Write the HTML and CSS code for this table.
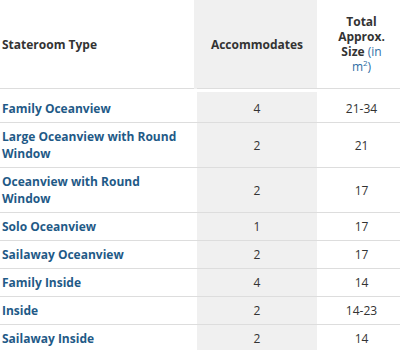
FILE: index.html
```html
<!DOCTYPE html>
<html>
<head>
<meta charset="utf-8">
<link rel="stylesheet" href="styles.css">
</head>
<body>
<table class="rooms">
  <thead>
    <tr>
      <th class="c-type">Stateroom Type</th>
      <th class="c-acc">Accommodates</th>
      <th class="c-size">Total Approx. Size <span class="unit">(in m<sup>2</sup>)</span></th>
    </tr>
  </thead>
  <tbody>
    <tr><td class="c-type"><a href="#">Family Oceanview</a></td><td class="c-acc">4</td><td class="c-size">21-34</td></tr>
    <tr><td class="c-type"><a href="#">Large Oceanview with Round Window</a></td><td class="c-acc">2</td><td class="c-size">21</td></tr>
    <tr><td class="c-type"><a href="#">Oceanview with Round Window</a></td><td class="c-acc">2</td><td class="c-size">17</td></tr>
    <tr><td class="c-type"><a href="#">Solo Oceanview</a></td><td class="c-acc">1</td><td class="c-size">17</td></tr>
    <tr><td class="c-type"><a href="#">Sailaway Oceanview</a></td><td class="c-acc">2</td><td class="c-size">17</td></tr>
    <tr><td class="c-type"><a href="#">Family Inside</a></td><td class="c-acc">4</td><td class="c-size">14</td></tr>
    <tr><td class="c-type"><a href="#">Inside</a></td><td class="c-acc">2</td><td class="c-size">14-23</td></tr>
    <tr><td class="c-type"><a href="#">Sailaway Inside</a></td><td class="c-acc">2</td><td class="c-size">14</td></tr>
  </tbody>
</table>
</body>
</html>
```

FILE: styles.css
```css
html, body {
  margin: 0;
  padding: 0;
  background: #fff;
  overflow: hidden;
}
body {
  font-family: "Open Sans", "Liberation Sans", sans-serif;
  font-size: 12px;
  color: #333;
}
.rooms {
  border-collapse: separate;
  border-spacing: 0;
  width: 406px;
  table-layout: fixed;
}
.rooms th {
  font-weight: 700;
  line-height: 15px;
  padding: 14px 2px;
  vertical-align: middle;
  border-bottom: 1px solid #ddd;
  color: #333;
}
.rooms th.c-type { text-align: left; width: 193px; }
.rooms th.c-acc {
  background: #f0f0f0;
  box-shadow: -3px 0 0 #f0f0f0;
  width: 112px;
  padding: 14px 4px;
}
.rooms th.c-size { width: 59px; padding: 14px 15px; }
.rooms th .unit { font-weight: 400; color: #2f6ea5; }
.rooms sup { font-size: 8px; line-height: 0; vertical-align: 5px; }
.rooms td {
  line-height: 17px;
  padding: 5px 2px;
  border-bottom: 1px solid #ddd;
  text-align: center;
  vertical-align: middle;
}
.rooms tbody tr:first-child td { border-top: 3px solid #fff; padding-top: 8px; }
.rooms td.c-type { text-align: left; padding-right: 6px; }
.rooms td.c-acc { background: #f0f0f0; }
.rooms a {
  color: #1f5a87;
  font-weight: 700;
  text-decoration: none;
}
```
